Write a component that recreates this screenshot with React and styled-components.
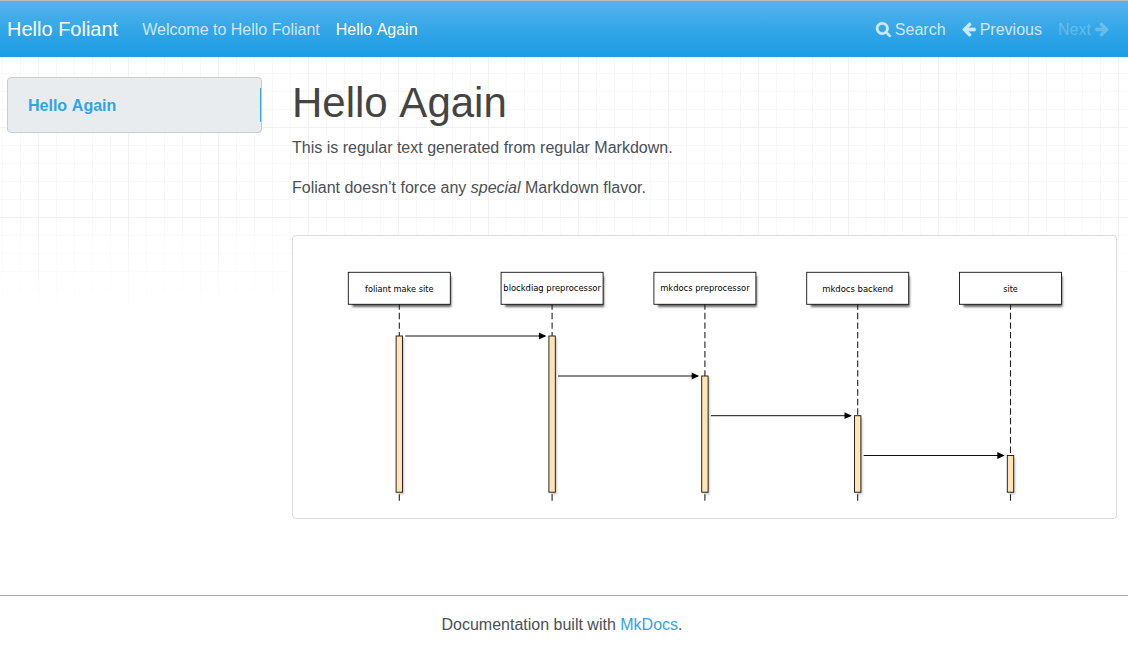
import React from "react";
import styled, { createGlobalStyle } from "styled-components";

const GlobalStyle = createGlobalStyle`
  * { box-sizing: border-box; }
  body {
    margin: 0;
    background: #fff;
    color: #495057;
    font-family: "Liberation Sans", Arial, sans-serif;
    font-size: 16px;
    line-height: 24px;
    overflow: hidden;
  }
  a { color: inherit; text-decoration: none; }
`;

const Page = styled.div`
  height: 656px;
  display: flex;
  flex-direction: column;
  background:
    linear-gradient(rgba(255, 255, 255, 0) 218px, #fff 314px),
    repeating-linear-gradient(90deg, transparent 0 38px, #f1f1f1 38px 39px, transparent 39px 90px),
    repeating-linear-gradient(180deg, transparent 0 37px, #f1f1f1 37px 38px, transparent 38px 90px),
    repeating-linear-gradient(90deg, transparent 0 2px, #f8f8f8 2px 3px, transparent 3px 18px),
    repeating-linear-gradient(180deg, transparent 0 1px, #f8f8f8 1px 2px, transparent 2px 18px),
    #fff;
`;

const Navbar = styled.nav`
  flex: none;
  height: 57px;
  padding: 1px 11px 0 7px;
  display: flex;
  align-items: center;
  border-top: 1px solid #bcbcbc;
  background: linear-gradient(#54b4eb, #2fa4e7 60%, #1d9ce5);
`;

const Brand = styled.a`
  margin-right: 16px;
  padding-bottom: 2px;
  color: #fff;
  font-size: 20px;
  line-height: 30px;
`;

const NavGroup = styled.div`
  display: flex;
  margin-left: ${(p) => (p.$end ? "auto" : "0")};
`;

const NavLink = styled.a`
  padding: 0 8px;
  white-space: pre;
  word-spacing: ${(p) => (p.$active ? "0.055em" : "normal")};
  color: rgba(255, 255, 255, ${(p) => (p.$active ? 1 : p.$disabled ? 0.25 : 0.75)});
`;

const Glyph = styled.svg`
  height: 16px;
  width: ${(p) => p.$width}px;
  vertical-align: -2px;
  overflow: visible;
  fill: currentColor;
  stroke: currentColor;
  stroke-width: ${(p) => p.$weight};
`;

const Columns = styled.div`
  display: flex;
  align-items: flex-start;
  padding: 20px 11px 0 7px;
  height: 538px;
`;

const Sidebar = styled.aside`
  flex: none;
  width: 255px;
  height: 56px;
  margin-right: 30px;
  padding: 10px 0;
  display: flex;
  background: #e9ecef;
  border: 1px solid #cbcdcf;
  border-radius: 4px;
`;

const SidebarLink = styled.a`
  flex: 1;
  padding: 6px 20px 4px;
  font-weight: 700;
  word-spacing: 0.055em;
  color: #2fa4e7;
  border-right: 1px solid #2fa4e7;
`;

const Content = styled.main`
  flex: 1;
  min-width: 0;
`;

const Title = styled.h1`
  margin: 0 0 8px;
  padding-top: 1px;
  font-size: 42px;
  line-height: 50px;
  font-weight: 400;
  word-spacing: 0.055em;
  color: #444;
`;

const Paragraph = styled.p`
  margin: 0 0 16px;
`;

const Figure = styled.figure`
  margin: 35px 0 0;
  height: 284px;
  border: 1px solid #dbdbdb;
  border-radius: 4px;
  background: #fff;
`;

const Diagram = styled.svg`
  display: block;
  width: 823px;
  height: 282px;
`;

const Footer = styled.footer`
  flex: 1;
  padding: 17px 4px 0 0;
  text-align: center;
  border-top: 1px solid #a6a6a6;
`;

const FooterLink = styled.a`
  color: #2fa4e7;
`;

const lanes = [
  { x: 399.3, label: "foliant make site", textWidth: 68.5, textY: 292, start: 336 },
  { x: 552.1, label: "blockdiag preprocessor", textWidth: 97.5, textY: 291, start: 336 },
  { x: 704.9, label: "mkdocs preprocessor", textWidth: 89.5, textY: 291, start: 376 },
  { x: 857.7, label: "mkdocs backend", textWidth: 71, textY: 292, start: 415.7 },
  { x: 1010.5, label: "site", textWidth: 14.5, textY: 292, start: 455.5 },
];

function SequenceDiagram() {
  return (
    <Diagram viewBox="293 236 823 282">
      <defs>
        <filter id="shadow" x="-30%" y="-30%" width="160%" height="160%">
          <feGaussianBlur stdDeviation="1.2" />
        </filter>
      </defs>
      {lanes.map((l) => (
        <g key={l.label}>
          <rect x={l.x - 47} y="276" width="99" height="31" fill="#000" opacity=".6" filter="url(#shadow)" />
          <rect x={l.x - 51} y="272.3" width="102" height="32" fill="#fff" stroke="#111" strokeWidth=".9" />
          <text
            x={l.x}
            y={l.textY}
            textAnchor="middle"
            textLength={l.textWidth}
            lengthAdjust="spacingAndGlyphs"
            fontFamily="DejaVu Sans, sans-serif"
            fontSize="8.4"
            fill="#000"
          >
            {l.label}
          </text>
          <path d={`M${l.x} 304.5V501`} stroke="#222" strokeWidth="1.1" strokeDasharray="6.4 3.15" strokeDashoffset="1.2" />
          <rect x={l.x - 1.2} y={l.start + 2} width="6" height={493.5 - l.start - 1} fill="#000" opacity=".22" filter="url(#shadow)" />
          <rect x={l.x - 3.2} y={l.start} width="6.4" height={492.2 - l.start} fill="#ffe4b5" stroke="#111" strokeWidth=".9" />
        </g>
      ))}
      {lanes.slice(1).map((l, i) => (
        <g key={l.label}>
          <path d={`M${lanes[i].x + 6} ${l.start}H${l.x - 7}`} stroke="#111" strokeWidth="1" />
          <path d={`M${l.x - 13.2} ${l.start - 3.4}L${l.x - 5.8} ${l.start}L${l.x - 13.2} ${l.start + 3.4}Z`} />
        </g>
      ))}
    </Diagram>
  );
}

const SearchIcon = () => (
  <Glyph $width={14.86} $weight={50} viewBox="64 0 1664 1792">
    <path d="M1216 832q0-185-131.5-316.5t-316.5-131.5-316.5 131.5-131.5 316.5 131.5 316.5 316.5 131.5 316.5-131.5 131.5-316.5zm512 832q0 52-38 90t-90 38q-54 0-90-38l-343-342q-179 124-399 124-143 0-273.5-55.5t-225-150-150-225-55.5-273.5 55.5-273.5 150-225 225-150 273.5-55.5 273.5 55.5 225 150 150 225 55.5 273.5q0 220-124 399l343 343q37 37 37 90z" />
  </Glyph>
);

const ArrowLeftIcon = () => (
  <Glyph $width={13.71} $weight={20} viewBox="128 0 1536 1792">
    <path d="M1664 896v128q0 53-32.5 90.5t-84.5 37.5h-704l293 294q38 36 38 90t-38 90l-75 76q-37 37-90 37-52 0-91-37l-651-652q-37-37-37-90 0-52 37-91l651-650q38-38 91-38 52 0 90 38l75 74q38 38 38 91t-38 91l-293 293h704q52 0 84.5 37.5t32.5 90.5z" />
  </Glyph>
);

const ArrowRightIcon = () => (
  <Glyph $width={13.71} $weight={20} viewBox="96 0 1536 1792">
    <path d="M1600 960q0 54-37 91l-651 651q-39 37-91 37-51 0-90-37l-75-75q-38-38-38-91t38-91l293-293h-704q-52 0-84.5-37.5t-32.5-90.5v-128q0-53 32.5-90.5t84.5-37.5h704l-293-294q-38-36-38-90t38-90l75-75q38-38 90-38 53 0 91 38l651 651q37 35 37 90z" />
  </Glyph>
);

export default function App() {
  return (
    <>
      <GlobalStyle />
      <Page>
        <Navbar>
          <Brand href="#">Hello Foliant</Brand>
          <NavGroup>
            <NavLink href="#">Welcome to Hello Foliant</NavLink>
            <NavLink href="#" $active>Hello Again</NavLink>
          </NavGroup>
          <NavGroup $end>
            <NavLink href="#"><SearchIcon /> Search</NavLink>
            <NavLink href="#"><ArrowLeftIcon /> Previous</NavLink>
            <NavLink $disabled>Next <ArrowRightIcon /></NavLink>
          </NavGroup>
        </Navbar>
        <Columns>
          <Sidebar>
            <SidebarLink href="#">Hello Again</SidebarLink>
          </Sidebar>
          <Content>
            <Title>Hello Again</Title>
            <Paragraph>This is regular text generated from regular Markdown.</Paragraph>
            <Paragraph>Foliant doesn’t force any <em>special</em> Markdown flavor.</Paragraph>
            <Figure>
              <SequenceDiagram />
            </Figure>
          </Content>
        </Columns>
        <Footer>
          Documentation built with <FooterLink href="#">MkDocs</FooterLink>.
        </Footer>
      </Page>
    </>
  );
}
